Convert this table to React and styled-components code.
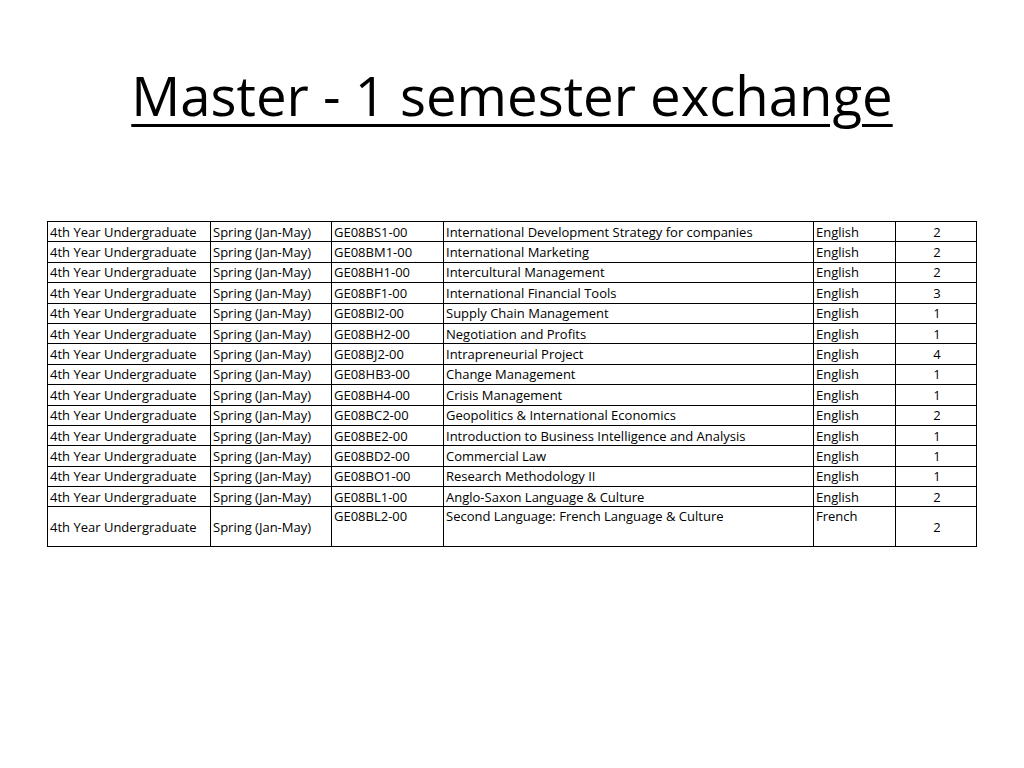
import React from 'react';
import styled, { createGlobalStyle } from 'styled-components';

const GlobalStyle = createGlobalStyle`
  html, body {
    margin: 0;
    padding: 0;
    background: #fff;
  }
  body {
    font-family: "Open Sans", "Liberation Sans", sans-serif;
    color: #000;
  }
`;

const Slide = styled.div`
  width: 1024px;
  height: 768px;
  display: flex;
  flex-direction: column;
  align-items: center;
  background: #fff;
`;

const Title = styled.h1`
  margin: 62px 0 0;
  font-family: "Open Sans", sans-serif;
  font-weight: 400;
  font-size: 54.5px;
  line-height: 66px;
  letter-spacing: 0;
  text-decoration: underline;
  text-decoration-thickness: 3px;
  text-underline-offset: 8px;
`;

const Table = styled.table`
  margin: 93px 0 0 0;
  border-collapse: collapse;
  border: 1.5px solid #000;
  table-layout: fixed;
  width: 929px;
  font-family: "Open Sans", sans-serif;
  font-size: 13px;
`;

const Cell = styled.td`
  border: 1px solid #000;
  padding: 0 0 0 2px;
  height: ${p => (p.$tall ? '39px' : '19.4px')};
  line-height: 18px;
  white-space: nowrap;
  overflow: hidden;
  text-align: ${p => (p.$center ? 'center' : 'left')};
  vertical-align: ${p => (p.$top ? 'top' : 'middle')};
`;

const widths = [163, 121, 112, 370, 82, 81];

const courses = [
  ['GE08BS1-00', 'International Development Strategy for companies', 'English', 2],
  ['GE08BM1-00', 'International Marketing', 'English', 2],
  ['GE08BH1-00', 'Intercultural Management', 'English', 2],
  ['GE08BF1-00', 'International Financial Tools', 'English', 3],
  ['GE08BI2-00', 'Supply Chain Management', 'English', 1],
  ['GE08BH2-00', 'Negotiation and Profits', 'English', 1],
  ['GE08BJ2-00', 'Intrapreneurial Project', 'English', 4],
  ['GE08HB3-00', 'Change Management', 'English', 1],
  ['GE08BH4-00', 'Crisis Management', 'English', 1],
  ['GE08BC2-00', 'Geopolitics & International Economics', 'English', 2],
  ['GE08BE2-00', 'Introduction to Business Intelligence and Analysis', 'English', 1],
  ['GE08BD2-00', 'Commercial Law', 'English', 1],
  ['GE08BO1-00', 'Research Methodology II', 'English', 1],
  ['GE08BL1-00', 'Anglo-Saxon Language & Culture', 'English', 2],
  ['GE08BL2-00', 'Second Language: French Language & Culture', 'French', 2, true],
];

const App = () => (
  <>
    <GlobalStyle />
    <Slide>
      <Title>Master - 1 semester exchange</Title>
      <Table>
        <colgroup>
          {widths.map((w, i) => <col key={i} style={{ width: w }} />)}
        </colgroup>
        <tbody>
          {courses.map(([code, name, lang, credits, tall]) => (
            <tr key={code}>
              <Cell $tall={tall}>4th Year Undergraduate</Cell>
              <Cell $tall={tall}>Spring (Jan-May)</Cell>
              <Cell $tall={tall} $top={tall}>{code}</Cell>
              <Cell $tall={tall} $top={tall}>{name}</Cell>
              <Cell $tall={tall} $top={tall}>{lang}</Cell>
              <Cell $tall={tall} $center>{credits}</Cell>
            </tr>
          ))}
        </tbody>
      </Table>
    </Slide>
  </>
);

export default App;
